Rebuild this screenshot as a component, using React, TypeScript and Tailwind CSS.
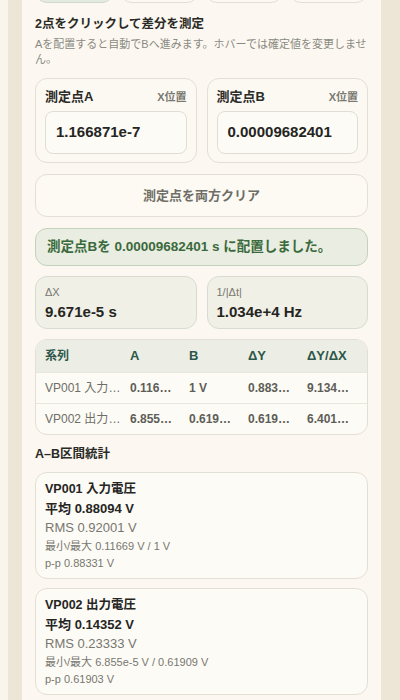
import React from 'react'

const font = { fontFamily: '"Liberation Sans", "Noto Sans CJK JP", sans-serif' }

const rows = [
  ['VP001 入力電圧', '0.11669 V', '1 V', '0.88331 V', '9.1342e+3 V/s'],
  ['VP002 出力電圧', '6.855e-5 V', '0.61909 V', '0.61903 V', '6.4013e+3 V/s'],
]

const stats = [
  { name: 'VP001 入力電圧', avg: '0.88094 V', rms: '0.92001 V', mm: '0.11669 V / 1 V', pp: '0.88331 V' },
  { name: 'VP002 出力電圧', avg: '0.14352 V', rms: '0.23333 V', mm: '6.855e-5 V / 0.61909 V', pp: '0.61903 V' },
]

function PointCard({ label, value }: { label: string; value: string }) {
  return (
    <div className="flex-1 rounded-xl border border-[#e4dfd4] bg-[#fcf9f3] px-[9px] pt-[9px] pb-[8px]">
      <div className="flex h-[18px] items-center justify-between">
        <span className="text-[13px] font-bold text-[#2a2a26]">{label}</span>
        <span className="text-[11px] font-bold text-[#7a7a72]">X位置</span>
      </div>
      <div className="mt-[5px] flex h-[43px] items-center rounded-lg border border-[#e2ddd2] bg-[#fdfbf6] px-[10px] text-[15px] font-bold text-[#25251f]">
        {value}
      </div>
    </div>
  )
}

export default function App() {
  return (
    <div className="flex min-h-[700px] bg-[#ede5d5]" style={font}>
      <div className="w-[8px] shrink-0 bg-[#faf5ec]" />
      <div className="w-[14px] shrink-0" />
      <div className="w-[359px] shrink-0 overflow-hidden bg-[#fcf8f1] px-[13px] pb-4">
        {/* タブ */}
        <div className="-mt-[30px] grid grid-cols-4 gap-[6px]">
          <div className="h-[33px] rounded-xl border border-[#cfd9cc] bg-[#e4eadf]" />
          <div className="h-[33px] rounded-xl border border-[#e4dfd4] bg-[#fcf9f3]" />
          <div className="h-[33px] rounded-xl border border-[#e4dfd4] bg-[#fcf9f3]" />
          <div className="h-[33px] rounded-xl border border-[#e4dfd4] bg-[#fcf9f3]" />
        </div>

        <h2 className="mt-[13px] text-[12.5px] font-bold leading-[17px] text-[#2a2a26]">2点をクリックして差分を測定</h2>
        <p className="mt-[4px] text-[11px] leading-[15px] text-[#8a8a82]">
          Aを配置すると自動でBへ進みます。ホバーでは確定値を変更しません。
        </p>

        <div className="mt-[11px] flex gap-[10px]">
          <PointCard label="測定点A" value="1.166871e-7" />
          <PointCard label="測定点B" value="0.00009682401" />
        </div>

        <button className="mt-[11px] flex h-[43px] w-full items-center justify-center rounded-xl border border-[#e4dfd4] bg-[#fdfaf4] text-[13px] font-bold text-[#6e6e66]">
          測定点を両方クリア
        </button>

        <div className="mt-[11px] flex h-[38px] items-center rounded-xl border border-[#c4d2bb] bg-[#eaede2] px-[11px] text-[13.5px] font-bold text-[#3a6a3c]">
          測定点Bを 0.00009682401 s に配置しました。
        </div>

        <div className="mt-[10px] grid grid-cols-2 gap-[10px]">
          <div className="h-[53px] rounded-xl border border-[#d6ddd0] bg-[#f1f0e7] px-[9px] pt-[9px]">
            <div className="text-[11px] leading-[13px] text-[#77776f]">ΔX</div>
            <div className="mt-[3px] text-[15px] font-bold leading-[19px] text-[#25251f]">9.671e-5 s</div>
          </div>
          <div className="h-[53px] rounded-xl border border-[#d6ddd0] bg-[#f1f0e7] px-[9px] pt-[9px]">
            <div className="text-[11px] leading-[13px] text-[#77776f]">1/|Δt|</div>
            <div className="mt-[3px] text-[15px] font-bold leading-[19px] text-[#25251f]">1.034e+4 Hz</div>
          </div>
        </div>

        <div className="mt-[10px] overflow-hidden rounded-xl border border-[#e4dfd4] bg-[#fdfbf6]">
          <table className="w-full table-fixed border-collapse">
            <colgroup>
              <col className="w-[91px]" />
              <col className="w-[59px]" />
              <col className="w-[59px]" />
              <col className="w-[59px]" />
              <col />
            </colgroup>
            <thead>
              <tr className="h-[32px] bg-[#eceee5] text-left text-[13px] font-bold text-[#2d5748]">
                <th className="pl-[9px] pr-[5px] text-[12px] font-bold">系列</th>
                <th className="pl-[3px] font-bold">A</th>
                <th className="pl-[3px] font-bold">B</th>
                <th className="pl-[3px] font-bold">ΔY</th>
                <th className="pl-[3px] font-bold">ΔY/ΔX</th>
              </tr>
            </thead>
            <tbody>
              {rows.map((r) => (
                <tr key={r[0]} className="h-[31px] border-t border-[#ebe6dc] text-[12px]">
                  <td className="truncate pl-[9px] pr-[5px] text-[#6e6e66]">{r[0]}</td>
                  {r.slice(1).map((c, i) => (
                    <td
                      key={i}
                      className={
                        i === 3
                          ? 'truncate pl-[3px] pr-[16px] font-bold text-[#5e5e58]'
                          : 'truncate pl-[3px] pr-[9px] font-bold text-[#5e5e58]'
                      }
                    >
                      {c}
                    </td>
                  ))}
                </tr>
              ))}
            </tbody>
          </table>
        </div>

        <h3 className="mt-[10px] text-[12.5px] font-bold leading-[18px] text-[#2a2a26]">A–B区間統計</h3>

        <div className="mt-[9px] flex flex-col gap-[9px]">
          {stats.map((s) => (
            <div key={s.name} className="rounded-xl border border-[#e4dfd4] bg-[#fdfbf6] px-[9px] pt-[7px] pb-[6px]">
              <div className="text-[12.5px] font-bold leading-[19px] text-[#25251f]">{s.name}</div>
              <div className="text-[13px] font-bold leading-[19px] text-[#25251f]">平均 {s.avg}</div>
              <div className="text-[13px] leading-[19px] text-[#77776f]">RMS {s.rms}</div>
              <div className="text-[11px] leading-[18px] text-[#77776f]">最小/最大 {s.mm}</div>
              <div className="text-[11px] leading-[17px] text-[#77776f]">p-p {s.pp}</div>
            </div>
          ))}
        </div>
      </div>
      <div className="flex-1" />
    </div>
  )
}
